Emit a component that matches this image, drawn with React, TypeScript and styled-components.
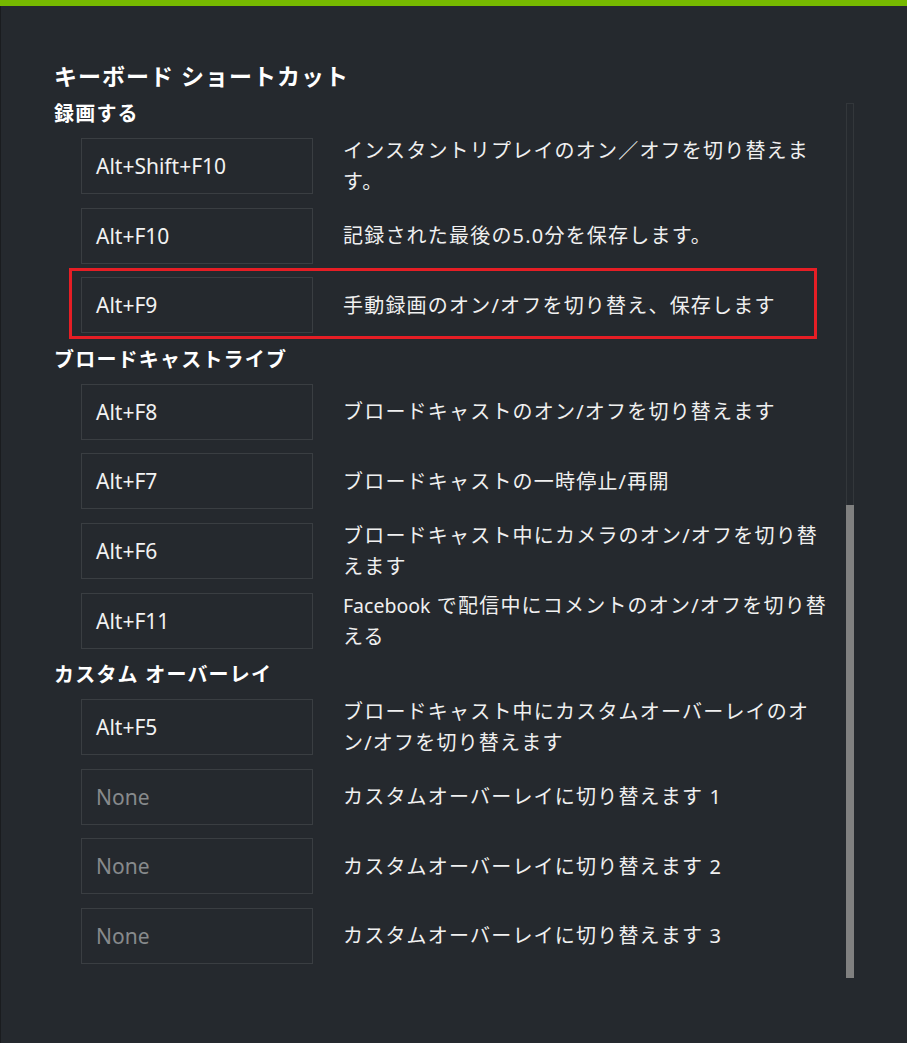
import styled, { createGlobalStyle } from 'styled-components';

type Shortcut = {
  keys: string;
  desc: string[];
  highlight?: boolean;
};

type Section = {
  title: string;
  items: Shortcut[];
};

const SECTIONS: Section[] = [
  {
    title: '録画する',
    items: [
      { keys: 'Alt+Shift+F10', desc: ['インスタントリプレイのオン／オフを切り替えま', 'す。'] },
      { keys: 'Alt+F10', desc: ['記録された最後の5.0分を保存します。'] },
      { keys: 'Alt+F9', desc: ['手動録画のオン/オフを切り替え、保存します'], highlight: true },
    ],
  },
  {
    title: 'ブロードキャストライブ',
    items: [
      { keys: 'Alt+F8', desc: ['ブロードキャストのオン/オフを切り替えます'] },
      { keys: 'Alt+F7', desc: ['ブロードキャストの一時停止/再開'] },
      { keys: 'Alt+F6', desc: ['ブロードキャスト中にカメラのオン/オフを切り替', 'えます'] },
      { keys: 'Alt+F11', desc: ['Facebook で配信中にコメントのオン/オフを切り替', 'える'] },
    ],
  },
  {
    title: 'カスタム オーバーレイ',
    items: [
      { keys: 'Alt+F5', desc: ['ブロードキャスト中にカスタムオーバーレイのオ', 'ン/オフを切り替えます'] },
      { keys: '', desc: ['カスタムオーバーレイに切り替えます 1'] },
      { keys: '', desc: ['カスタムオーバーレイに切り替えます 2'] },
      { keys: '', desc: ['カスタムオーバーレイに切り替えます 3'] },
    ],
  },
];

const FONT = `"Noto Sans", "Noto Sans CJK JP", sans-serif`;

const GlobalStyle = createGlobalStyle`
  html, body {
    margin: 0;
    padding: 0;
    background: #25292e;
  }
  body {
    font-family: ${FONT};
    color: #f0f0f0;
  }
`;

const Frame = styled.div`
  width: 907px;
  height: 1043px;
  background: #25292e;
  box-shadow: inset 1px 0 0 #1a1c1f;
  display: flex;
  flex-direction: column;
  overflow: hidden;
`;

const AccentBar = styled.div`
  height: 6px;
  background: #76b900;
  flex-shrink: 0;
`;

const Title = styled.h1`
  margin: 54px 0 0 54px;
  height: 32px;
  line-height: 32px;
  font-size: 23px;
  font-weight: 700;
  letter-spacing: 1px;
  color: #ffffff;
`;

const Body = styled.div`
  display: flex;
  margin-top: 9px;
  padding-left: 54px;
`;

const List = styled.div`
  width: 792px;
  display: flex;
  flex-direction: column;
`;

const SectionTitle = styled.h2`
  margin: 0 0 11px;
  height: 26px;
  line-height: 26px;
  font-size: 20px;
  font-weight: 700;
  letter-spacing: 1.2px;
  color: #ffffff;
`;

const Row = styled.div`
  position: relative;
  display: flex;
  align-items: center;
  height: 56px;
  margin-bottom: 13.6px;
  padding-left: 27px;
`;

const KeyBox = styled.div<{ $empty: boolean }>`
  box-sizing: border-box;
  width: 232px;
  height: 56px;
  flex-shrink: 0;
  display: flex;
  align-items: center;
  padding-left: 14px;
  border: 1px solid #3a3e42;
  font-size: 21px;
  color: ${(p) => (p.$empty ? '#878a8c' : '#f2f2f2')};
`;

const Desc = styled.div`
  margin-left: 30px;
  font-size: 20px;
  line-height: 31px;
  letter-spacing: 1.2px;
  color: #f0f0f0;
  white-space: nowrap;
`;

const DescLine = styled.span`
  display: block;
`;

const Latin = styled.span`
  letter-spacing: 0;
  font-size: 19.5px;
`;

const Highlight = styled.div`
  position: absolute;
  left: 15px;
  top: -9px;
  width: 748px;
  height: 71px;
  box-sizing: border-box;
  border: 3px solid #e61e25;
  pointer-events: none;
`;

const Track = styled.div`
  box-sizing: border-box;
  width: 8px;
  height: 875px;
  margin-top: 2px;
  border: 1px solid #33373b;
  display: flex;
  flex-direction: column;
  justify-content: flex-end;
`;

const Thumb = styled.div`
  margin: 0 -1px -1px;
  height: 473px;
  background: #808080;
`;

// latin runs get normal spacing, kana keep the wider pitch
function renderLine(line: string) {
  return line.split(/([A-Za-z][A-Za-z0-9.]*)/).map((part, i) =>
    /^[A-Za-z]/.test(part) ? <Latin key={i}>{part}</Latin> : part
  );
}

export default function App() {
  return (
    <>
      <GlobalStyle />
      <Frame>
        <AccentBar />
        <Title>キーボード ショートカット</Title>
        <Body>
          <List>
            {SECTIONS.map((section) => (
              <div key={section.title}>
                <SectionTitle>{section.title}</SectionTitle>
                {section.items.map((item, i) => (
                  <Row key={i}>
                    <KeyBox $empty={!item.keys}>{item.keys || 'None'}</KeyBox>
                    <Desc>
                      {item.desc.map((line) => (
                        <DescLine key={line}>{renderLine(line)}</DescLine>
                      ))}
                    </Desc>
                    {item.highlight && <Highlight />}
                  </Row>
                ))}
              </div>
            ))}
          </List>
          <Track>
            <Thumb />
          </Track>
        </Body>
      </Frame>
    </>
  );
}
